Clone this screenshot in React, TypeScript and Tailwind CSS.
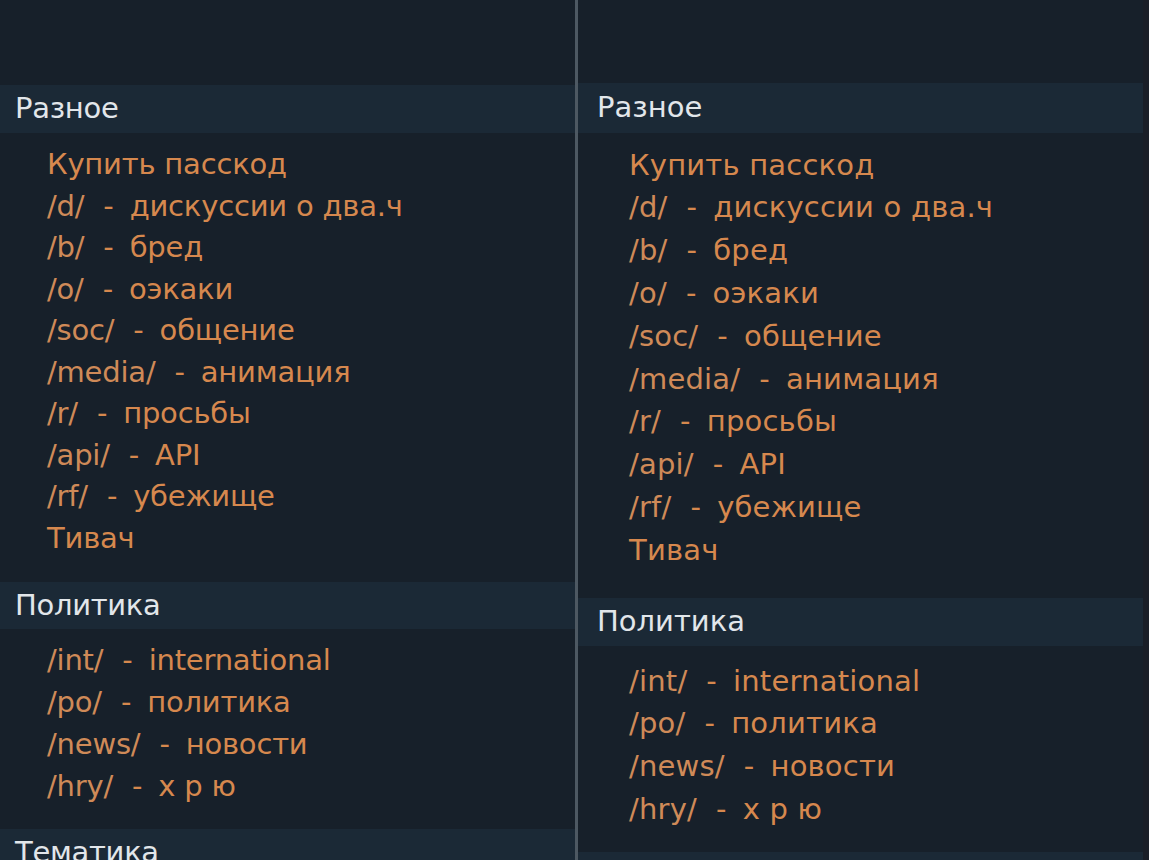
import React from "react";

type Item = { board?: string; desc: string };

const misc: Item[] = [
  { desc: "Купить пасскод" },
  { board: "/d/", desc: "дискуссии о два.ч" },
  { board: "/b/", desc: "бред" },
  { board: "/o/", desc: "оэкаки" },
  { board: "/soc/", desc: "общение" },
  { board: "/media/", desc: "анимация" },
  { board: "/r/", desc: "просьбы" },
  { board: "/api/", desc: "API" },
  { board: "/rf/", desc: "убежище" },
  { desc: "Тивач" },
];

const politics: Item[] = [
  { board: "/int/", desc: "international" },
  { board: "/po/", desc: "политика" },
  { board: "/news/", desc: "новости" },
  { board: "/hry/", desc: "х р ю" },
];

function Header({ title, cls }: { title: string; cls: string }) {
  return (
    <div className={"flex shrink-0 items-center bg-[#1b2936] text-[29px] text-[#e2e6ea] " + cls}>
      {title}
    </div>
  );
}

function Row({ item, cls }: { item: Item; cls: string }) {
  return (
    <div className={"flex shrink-0 items-center whitespace-nowrap text-[29px] text-[#d6884e] " + cls}>
      {item.board ? (
        <>
          <span className="text-[#cf8a58]">{item.board}</span>
          <span className="ml-[19px] mr-[16px]">-</span>
        </>
      ) : null}
      <span>{item.desc}</span>
    </div>
  );
}

function LeftPanel() {
  return (
    <div className="flex w-[575px] shrink-0 flex-col bg-[#17202a] pt-[85px] [font-family:'DejaVu_Sans',sans-serif]">
      <Header title="Разное" cls="h-[48px] pl-[15px] tracking-[-0.3px]" />
      <div className="flex shrink-0 flex-col pt-[11px] pb-[23px] pl-[47px]">
        {misc.map((m) => (
          <Row key={m.desc} item={m} cls="h-[41.5px] tracking-[-0.2px]" />
        ))}
      </div>
      <Header title="Политика" cls="h-[47px] pl-[15px] tracking-[-0.3px]" />
      <div className="flex shrink-0 flex-col pt-[11px] pb-[21px] pl-[47px]">
        {politics.map((m) => (
          <Row key={m.desc} item={m} cls="h-[42px] tracking-[-0.2px]" />
        ))}
      </div>
      <Header title="Тематика" cls="h-[48px] pl-[15px] tracking-[-0.3px]" />
    </div>
  );
}

function RightPanel() {
  return (
    <div className="flex flex-1 bg-[#17202a]">
      <div className="flex flex-1 flex-col pt-[83px] [font-family:'DejaVu_Sans',sans-serif]">
        <Header title="Разное" cls="h-[50px] pl-[19px]" />
        <div className="flex shrink-0 flex-col pt-[11px] pb-[26px] pl-[51px]">
          {misc.map((m) => (
            <Row key={m.desc} item={m} cls="h-[42.8px] tracking-[0.2px]" />
          ))}
        </div>
        <Header title="Политика" cls="h-[48px] pl-[19px]" />
        <div className="flex shrink-0 flex-col pt-[14px] pb-[21px] pl-[51px]">
          {politics.map((m) => (
            <Row key={m.desc} item={m} cls="h-[42.7px] tracking-[0.2px]" />
          ))}
        </div>
        <div className="h-[48px] shrink-0 bg-[#1b2936]" />
      </div>
      <div className="w-[6px] shrink-0 bg-[#1a1e27]" />
    </div>
  );
}

export default function App() {
  return (
    <div className="flex h-[860px] w-[1149px] overflow-hidden bg-[#17202a]">
      <LeftPanel />
      <div className="w-[3px] shrink-0 bg-[#4d5862]" />
      <RightPanel />
    </div>
  );
}
